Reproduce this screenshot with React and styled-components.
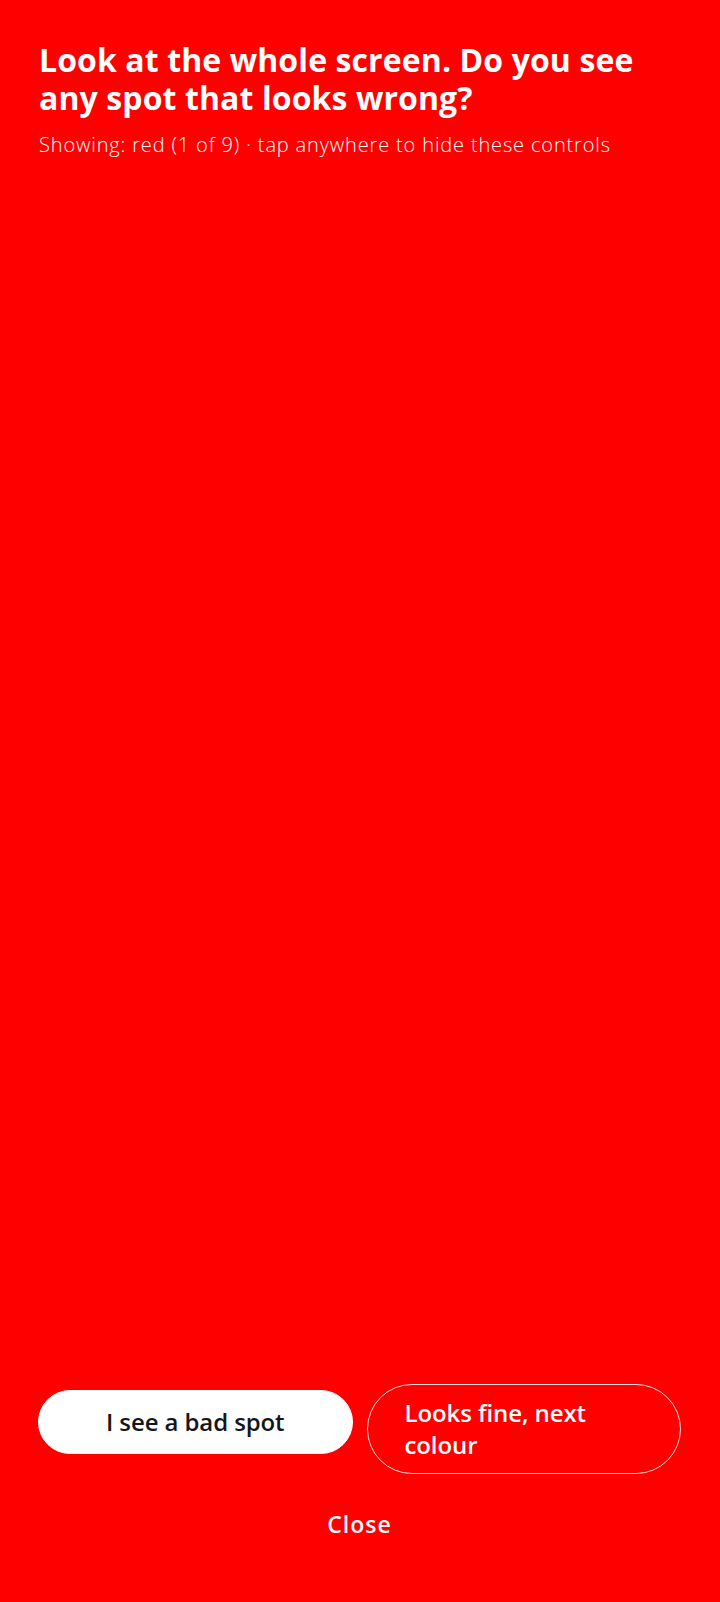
import React from 'react'
import styled, { createGlobalStyle } from 'styled-components'

const GlobalStyle = createGlobalStyle`
    html, body {
        margin: 0;
        padding: 0;
        background: #ff0000;
    }
    * {
        box-sizing: border-box;
    }
`

const Screen = styled.div`
    min-height: 100vh;
    display: flex;
    flex-direction: column;
    padding: 41px 39px 0 38px;
    background: #ff0000;
    color: #ffffff;
    font-family: "Open Sans", "Noto Sans", sans-serif;
`

const Header = styled.header`
    display: flex;
    flex-direction: column;
`

const Title = styled.h1`
    margin: 0;
    padding-left: 1px;
    font-size: 32px;
    line-height: 38px;
    font-weight: 700;
    letter-spacing: 0.1px;
`

const Hint = styled.p`
    margin: 14px 0 0;
    padding-left: 1px;
    font-size: 20px;
    line-height: 28px;
    font-weight: 300;
    letter-spacing: 0.85px;
`

const Spacer = styled.div`
    flex: 1;
`

const Actions = styled.div`
    display: flex;
    align-items: flex-start;
    gap: 14px;
`

const PillButton = styled.button`
    flex: 1 1 0;
    min-height: 64px;
    margin-top: ${p => (p.$solid ? '6px' : '0')};
    display: flex;
    align-items: center;
    justify-content: center;
    text-align: left;
    padding: 12px 37px;
    border-radius: 999px;
    border: 1.5px solid ${p => (p.$solid ? '#ffffff' : 'rgba(255, 255, 255, 0.85)')};
    background: ${p => (p.$solid ? '#ffffff' : 'transparent')};
    color: ${p => (p.$solid ? '#16161a' : '#ffffff')};
    font-family: inherit;
    font-size: 24px;
    line-height: 32px;
    font-weight: 600;
    letter-spacing: -0.1px;
    cursor: pointer;
`

const CloseButton = styled.button`
    align-self: center;
    margin: 30px 0 58px;
    padding: 4px 12px;
    border: none;
    background: none;
    color: #ffffff;
    font-family: inherit;
    font-size: 23px;
    line-height: 32px;
    font-weight: 600;
    letter-spacing: 1px;
    cursor: pointer;
`

const App = () => {
    return (
        <>
            <GlobalStyle />
            <Screen>
                <Header>
                    <Title>Look at the whole screen. Do you see any spot that looks wrong?</Title>
                    <Hint>Showing: red (1 of 9) · tap anywhere to hide these controls</Hint>
                </Header>
                <Spacer />
                <Actions>
                    <PillButton $solid>I see a bad spot</PillButton>
                    <PillButton>Looks fine, next colour</PillButton>
                </Actions>
                <CloseButton>Close</CloseButton>
            </Screen>
        </>
    )
}

export default App
